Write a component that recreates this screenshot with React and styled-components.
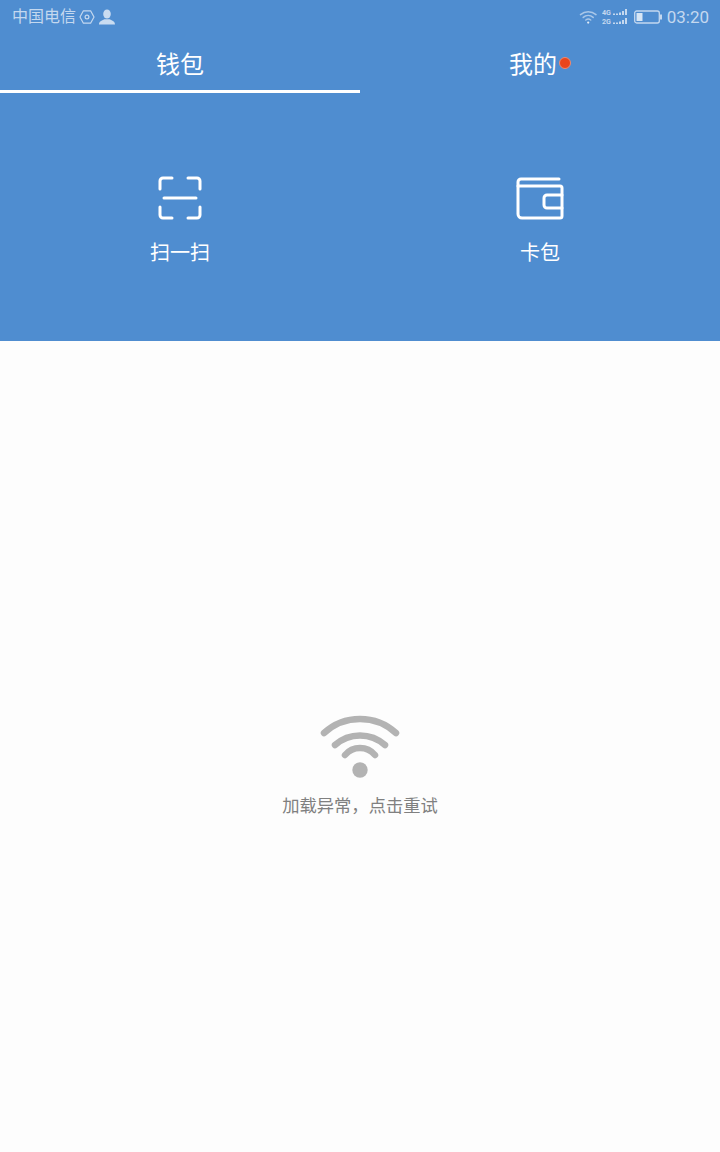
import styled, { createGlobalStyle } from 'styled-components'

const GlobalStyle = createGlobalStyle`
  html, body {
    margin: 0;
    padding: 0;
    background: #fdfdfd;
  }
  * {
    box-sizing: border-box;
  }
`

const FONT = `Roboto, "Noto Sans CJK SC", sans-serif`

function SimIcon() {
  return (
    <svg width="16" height="16" viewBox="0 0 16 16" fill="none" stroke="#c4d8ef" strokeWidth="1.2" strokeLinejoin="round">
      <path d="M4.4 1.8h7.200L15 8l-3.400 6.200H4.400L1 8z" />
      <circle cx="8" cy="8" r="1.900" />
    </svg>
  )
}

function UserIcon() {
  return (
    <svg width="18" height="16" viewBox="0 0 18 16" fill="#c9dcf1">
      <ellipse cx="9" cy="5" rx="3.800" ry="4.600" />
      <path d="M1 15.500c0-3 2.600-4 5.400-5.200h5.200c2.800 1.200 5.400 2.200 5.400 5.200z" />
    </svg>
  )
}

function WifiSmall() {
  return (
    <svg width="18" height="14" viewBox="0 0 18 14" fill="none" stroke="#a9c7e8" strokeWidth="1.500" strokeLinecap="round">
      <path d="M1.500 4.600c4.400-3.800 11-3.800 15.500 0" />
      <path d="M4.200 7.400c2.900-2.400 7.100-2.400 10 0" />
      <path d="M6.800 10c1.500-1.100 3.400-1.100 4.900 0" />
      <circle cx="9.200" cy="12.600" r="1.100" fill="#e2ecf8" stroke="none" />
    </svg>
  )
}

const SIGNAL_BARS = [
  { x: 11, h: 1.5 },
  { x: 14, h: 1.5 },
  { x: 17, h: 2.5 },
  { x: 20, h: 4 },
  { x: 23, h: 6 },
]

function SignalIcon() {
  return (
    <svg width="27" height="16" viewBox="0 0 27 16" fill="#c4d8ef">
      <text x="0" y="6" fontFamily="Roboto, sans-serif" fontSize="8" fontWeight="700" textLength="9" lengthAdjust="spacingAndGlyphs">4G</text>
      <text x="0" y="15" fontFamily="Roboto, sans-serif" fontSize="8" fontWeight="700" textLength="9" lengthAdjust="spacingAndGlyphs">2G</text>
      {SIGNAL_BARS.map((bar) => (
        <g key={bar.x}>
          <rect x={bar.x} y={6 - bar.h} width="2" height={bar.h} />
          <rect x={bar.x} y={15 - bar.h} width="2" height={bar.h} />
        </g>
      ))}
    </svg>
  )
}

function BatteryIcon() {
  return (
    <svg width="28" height="14" viewBox="0 0 28 14" fill="none">
      <rect x="0.700" y="1" width="24.600" height="12" rx="2" stroke="#c4d8ef" strokeWidth="1.300" />
      <rect x="2.500" y="3" width="6" height="8" fill="#d8e6f5" />
      <rect x="26" y="4.500" width="2" height="5" fill="#c4d8ef" />
    </svg>
  )
}

function ScanIcon() {
  return (
    <svg width="44" height="44" viewBox="0 0 44 44" fill="none" stroke="#fff" strokeWidth="3" strokeLinecap="round" strokeLinejoin="round">
      <path d="M14 2H5a3 3 0 0 0-3 3v8" />
      <path d="M30 2h9a3 3 0 0 1 3 3v8" />
      <path d="M2 31v8a3 3 0 0 0 3 3h9" />
      <path d="M42 31v8a3 3 0 0 1-3 3h-9" />
      <path d="M6 22h32" />
    </svg>
  )
}

function WalletIcon() {
  return (
    <svg width="48" height="44" viewBox="0 0 48 44" fill="none" stroke="#fff" strokeWidth="3" strokeLinecap="round" strokeLinejoin="round">
      <path d="M2 10V38a4 4 0 0 0 4 4h38a2 2 0 0 0 2-2V12a2 2 0 0 0-2-2H2z" />
      <path d="M2 10V6a3 3 0 0 1 3-3h38" />
      <path d="M46 19H31a3 3 0 0 0-3 3v7a3 3 0 0 0 3 3h15" />
    </svg>
  )
}

function WifiLarge() {
  return (
    <svg width="80" height="64" viewBox="0 0 80 64" fill="none" stroke="#b3b3b3" strokeWidth="6.500" strokeLinecap="round">
      <path d="M4 19A53.300 53.300 0 0 1 76 19" />
      <path d="M15 31A37.500 37.500 0 0 1 65 31" />
      <path d="M25 41A19.600 19.600 0 0 1 55 41" />
      <circle cx="40" cy="56" r="7.700" fill="#b3b3b3" stroke="none" />
    </svg>
  )
}

const Page = styled.div`
  width: 720px;
  height: 1152px;
  display: flex;
  flex-direction: column;
  font-family: ${FONT};
  background: #fdfdfd;
  overflow: hidden;
`

const Header = styled.header`
  height: 341px;
  background: #4f8dd0;
  flex-shrink: 0;
`

const StatusBar = styled.div`
  height: 33px;
  padding: 0 11px 0 12px;
  display: flex;
  align-items: center;
  justify-content: space-between;
  color: #c4d8ef;
`

const StatusGroup = styled.div`
  display: flex;
  align-items: center;
  gap: ${(p) => p.$gap || 3}px;
`

const Carrier = styled.span`
  font-size: 16px;
  line-height: 20px;
`

const Clock = styled.span`
  font-size: 17px;
  line-height: 20px;
`

const Tabs = styled.nav`
  display: flex;
  height: 60px;
`

const Tab = styled.div`
  flex: 1;
  height: 60px;
  display: flex;
  align-items: center;
  justify-content: center;
  padding-top: 6px;
  color: #fff;
  font-size: 24px;
  border-bottom: 3px solid ${(p) => (p.$active ? '#fff' : 'transparent')};
`

const TabLabel = styled.span`
  display: flex;
  align-items: center;
  gap: 2px;
  line-height: 28px;
`

const RedDot = styled.i`
  width: 12px;
  height: 12px;
  margin-top: -3px;
  border-radius: 50%;
  background: #e8451c;
  border: 1px solid #f08a70;
`

const Actions = styled.div`
  display: flex;
  padding-top: 83px;
`

const Action = styled.div`
  flex: 1;
  display: flex;
  flex-direction: column;
  align-items: center;
  color: #fff;
`

const ActionIcon = styled.div`
  height: 44px;
  display: flex;
  align-items: center;
  justify-content: center;
`

const ActionLabel = styled.span`
  margin-top: 20px;
  font-size: 20px;
  line-height: 26px;
`

const Body = styled.main`
  flex: 1;
  display: flex;
  flex-direction: column;
  align-items: center;
  padding-top: 373px;
`

const ErrorText = styled.p`
  margin: 16px 0 0;
  font-size: 17.300px;
  line-height: 24px;
  color: #808080;
  white-space: nowrap;
`

export default function App() {
  return (
    <Page>
      <GlobalStyle />
      <Header>
        <StatusBar>
          <StatusGroup>
            <Carrier>中国电信</Carrier>
            <SimIcon />
            <UserIcon />
          </StatusGroup>
          <StatusGroup $gap={5}>
            <WifiSmall />
            <SignalIcon />
            <BatteryIcon />
            <Clock>03:20</Clock>
          </StatusGroup>
        </StatusBar>
        <Tabs>
          <Tab $active>
            <TabLabel>钱包</TabLabel>
          </Tab>
          <Tab>
            <TabLabel>
              我的
              <RedDot />
            </TabLabel>
          </Tab>
        </Tabs>
        <Actions>
          <Action>
            <ActionIcon>
              <ScanIcon />
            </ActionIcon>
            <ActionLabel>扫一扫</ActionLabel>
          </Action>
          <Action>
            <ActionIcon>
              <WalletIcon />
            </ActionIcon>
            <ActionLabel>卡包</ActionLabel>
          </Action>
        </Actions>
      </Header>
      <Body>
        <WifiLarge />
        <ErrorText>加载异常，点击重试</ErrorText>
      </Body>
    </Page>
  )
}
